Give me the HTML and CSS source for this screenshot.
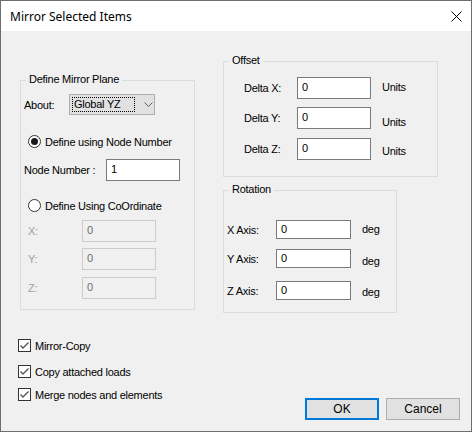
FILE: index.html
```html
<!DOCTYPE html>
<html>
<head>
<meta charset="utf-8">
<link rel="stylesheet" href="styles.css">
</head>
<body>
<div class="window">
  <div class="titlebar">
    <span class="title">Mirror Selected Items</span>
    <svg class="close" width="11" height="11" viewBox="0 0 11 11"><path d="M0.5 0.5 L10.5 10.5 M10.5 0.5 L0.5 10.5" stroke="#000" stroke-width="1" fill="none"/></svg>
  </div>
  <div class="client">
    <div class="content">
      <div class="group group-plane">
        <span class="legend">Define Mirror Plane</span>
        <div class="row row-about">
          <span class="lbl lbl-about">About:</span>
          <div class="combo">
            <span class="combo-text">Global YZ</span>
            <svg class="chev" width="9" height="5" viewBox="0 0 9 5"><path d="M0.5 0.5 L4.5 4.5 L8.5 0.5" stroke="#606060" fill="none" stroke-width="1"/></svg>
          </div>
        </div>
        <div class="row radio-row radio-node">
          <svg class="radio" width="13" height="13" viewBox="0 0 13 13"><circle cx="6.5" cy="6.5" r="6" fill="#fff" stroke="#333"/><circle cx="6.5" cy="6.5" r="3.5" fill="#1a1a1a"/></svg>
          <span>Define using Node Number</span>
        </div>
        <div class="row row-node">
          <span class="lbl lbl-node">Node Number :</span>
          <div class="edit">1</div>
        </div>
        <div class="row radio-row radio-coord">
          <svg class="radio" width="13" height="13" viewBox="0 0 13 13"><circle cx="6.5" cy="6.5" r="6" fill="#fff" stroke="#333"/></svg>
          <span>Define Using CoOrdinate</span>
        </div>
        <div class="row row-coord row-x">
          <span class="lbl lbl-dis">X:</span>
          <div class="edit edit-dis">0</div>
        </div>
        <div class="row row-coord row-y">
          <span class="lbl lbl-dis">Y:</span>
          <div class="edit edit-dis">0</div>
        </div>
        <div class="row row-coord row-z">
          <span class="lbl lbl-dis">Z:</span>
          <div class="edit edit-dis">0</div>
        </div>
      </div>
      <div class="rightcol">
        <div class="group group-offset">
          <span class="legend">Offset</span>
          <div class="row orow orow-1">
            <span class="lbl lbl-delta">Delta X:</span>
            <div class="edit">0</div>
            <span class="unit unit-1">Units</span>
          </div>
          <div class="row orow orow-2">
            <span class="lbl lbl-delta">Delta Y:</span>
            <div class="edit">0</div>
            <span class="unit unit-2">Units</span>
          </div>
          <div class="row orow orow-3">
            <span class="lbl lbl-delta">Delta Z:</span>
            <div class="edit">0</div>
            <span class="unit unit-3">Units</span>
          </div>
        </div>
        <div class="group group-rot">
          <span class="legend">Rotation</span>
          <div class="row rrow rrow-1">
            <span class="lbl lbl-axis">X Axis:</span>
            <div class="edit edit-sm">0</div>
            <span class="unit deg-1">deg</span>
          </div>
          <div class="row rrow rrow-2">
            <span class="lbl lbl-axis">Y Axis:</span>
            <div class="edit edit-sm">0</div>
            <span class="unit deg-2">deg</span>
          </div>
          <div class="row rrow rrow-3">
            <span class="lbl lbl-axis">Z Axis:</span>
            <div class="edit edit-sm">0</div>
            <span class="unit deg-3">deg</span>
          </div>
        </div>
      </div>
    </div>
    <div class="footer">
      <div class="checks">
        <div class="check check-1">
          <svg class="cbox" width="13" height="13" viewBox="0 0 13 13"><rect x="0.5" y="0.5" width="12" height="12" fill="#fff" stroke="#333"/><path d="M2.5 6.5 L5 9 L10.5 3.5" stroke="#555" stroke-width="1.4" fill="none"/></svg>
          <span>Mirror-Copy</span>
        </div>
        <div class="check check-2">
          <svg class="cbox" width="13" height="13" viewBox="0 0 13 13"><rect x="0.5" y="0.5" width="12" height="12" fill="#fff" stroke="#333"/><path d="M2.5 6.5 L5 9 L10.5 3.5" stroke="#555" stroke-width="1.4" fill="none"/></svg>
          <span>Copy attached loads</span>
        </div>
        <div class="check check-3">
          <svg class="cbox" width="13" height="13" viewBox="0 0 13 13"><rect x="0.5" y="0.5" width="12" height="12" fill="#fff" stroke="#333"/><path d="M2.5 6.5 L5 9 L10.5 3.5" stroke="#555" stroke-width="1.4" fill="none"/></svg>
          <span>Merge nodes and elements</span>
        </div>
      </div>
      <div class="buttons">
        <div class="btn btn-default">OK</div>
        <div class="btn">Cancel</div>
      </div>
    </div>
  </div>
</div>
</body>
</html>
```
FILE: styles.css
```css
html, body {
  margin: 0;
  padding: 0;
  background: #f0f0f0;
}
.window {
  width: 472px;
  height: 432px;
  box-sizing: border-box;
  border: 1px solid #6e6e6e;
  background: #f0f0f0;
  font-family: "Liberation Sans", Arial, sans-serif;
  font-size: 11px;
  letter-spacing: -0.25px;
  color: #000;
  display: flex;
  flex-direction: column;
}
.titlebar {
  height: 30px;
  background: #fff;
  display: flex;
  align-items: center;
  justify-content: space-between;
  padding: 0 9px 0 9px;
  letter-spacing: 0;
}
.title {
  font-family: "Noto Sans", "Liberation Sans", sans-serif;
  font-size: 12px;
  color: #000;
  margin-top: 1px;
}
.close {
  display: block;
}
.client {
  flex: 1;
  display: flex;
  flex-direction: column;
}
.content {
  display: flex;
  align-items: flex-start;
}
.group {
  position: relative;
  box-sizing: border-box;
  border: 1px solid #dcdcdc;
  display: flex;
  flex-direction: column;
}
.legend {
  position: absolute;
  top: -8px;
  left: 5px;
  padding: 0 3px;
  background: #f0f0f0;
  line-height: 13px;
}
.group-plane {
  margin-left: 19px;
  margin-top: 49px;
  width: 175px;
  height: 230px;
}
.rightcol {
  margin-left: 28px;
  display: flex;
  flex-direction: column;
}
.group-offset {
  margin-top: 30px;
  width: 215px;
  height: 116px;
}
.group-rot {
  margin-top: 13px;
  width: 174px;
  height: 123px;
}
.row {
  display: flex;
  align-items: center;
}
.lbl {
  flex: none;
}
.row-about {
  margin-top: 13px;
  padding-left: 3px;
  height: 21px;
}
.lbl-about {
  width: 45px;
}
.combo {
  box-sizing: border-box;
  width: 86px;
  height: 21px;
  border: 1px solid #adadad;
  background: #e1e1e1;
  display: flex;
  align-items: center;
}
.combo-text {
  box-sizing: border-box;
  width: 63px;
  height: 15px;
  margin-left: 2px;
  padding-left: 1px;
  border: 1px dotted #000;
  line-height: 13px;
}
.chev {
  margin-left: 9px;
}
.radio-row {
  height: 13px;
  padding-left: 7px;
}
.radio {
  display: block;
  margin-right: 4px;
}
.radio-node {
  margin-top: 20px;
}
.row-node {
  margin-top: 11px;
  padding-left: 3px;
}
.lbl-node {
  width: 82px;
}
.radio-coord {
  margin-top: 18px;
}
.edit {
  box-sizing: border-box;
  width: 74px;
  height: 22px;
  border: 1px solid #7a7a7a;
  background: #fff;
  padding: 3px 0 0 4px;
  line-height: 13px;
}
.edit-dis {
  border-color: #cccccc;
  background: #f0f0f0;
  color: #6d6d6d;
}
.lbl-dis {
  color: #a0a0a0;
  width: 54px;
}
.row-coord {
  padding-left: 7px;
}
.row-x { margin-top: 8px; }
.row-y { margin-top: 6px; }
.row-z { margin-top: 7px; }

.orow {
  padding-left: 20px;
  align-items: flex-start;
}
.orow .lbl, .rrow .lbl {
  align-self: center;
}
.lbl-delta {
  width: 53px;
}
.orow-1 { margin-top: 15px; }
.orow-2 { margin-top: 8px; }
.orow-3 { margin-top: 9px; }
.unit {
  margin-left: 11px;
  line-height: 13px;
}
.unit-1 { margin-top: 4px; }
.unit-2 { margin-top: 9px; }
.unit-3 { margin-top: 7px; }

.rrow {
  padding-left: 3px;
  align-items: flex-start;
}
.lbl-axis {
  width: 49px;
}
.edit-sm {
  width: 75px;
  height: 19px;
  padding-top: 2px;
}
.rrow-1 { margin-top: 29px; }
.rrow-2 { margin-top: 10px; }
.rrow-3 { margin-top: 13px; }
.deg-1 { margin-top: 3px; }
.deg-2 { margin-top: 6px; }
.deg-3 { margin-top: 5px; }

.footer {
  display: flex;
  justify-content: space-between;
  align-items: flex-start;
  margin-top: 26px;
}
.checks {
  margin-left: 17px;
  display: flex;
  flex-direction: column;
}
.check {
  display: flex;
  align-items: center;
  height: 13px;
}
.cbox {
  display: block;
  margin-right: 4px;
}
.check-2 { margin-top: 13px; }
.check-3 { margin-top: 10px; }
.buttons {
  display: flex;
  gap: 7px;
  margin-top: 59px;
  margin-right: 11px;
}
.btn {
  box-sizing: border-box;
  width: 74px;
  height: 22px;
  border: 1px solid #adadad;
  background: #e1e1e1;
  display: flex;
  align-items: center;
  justify-content: center;
  font-size: 12px;
  letter-spacing: 0;
}
.btn-default {
  border: 2px solid #0078d7;
}
```
